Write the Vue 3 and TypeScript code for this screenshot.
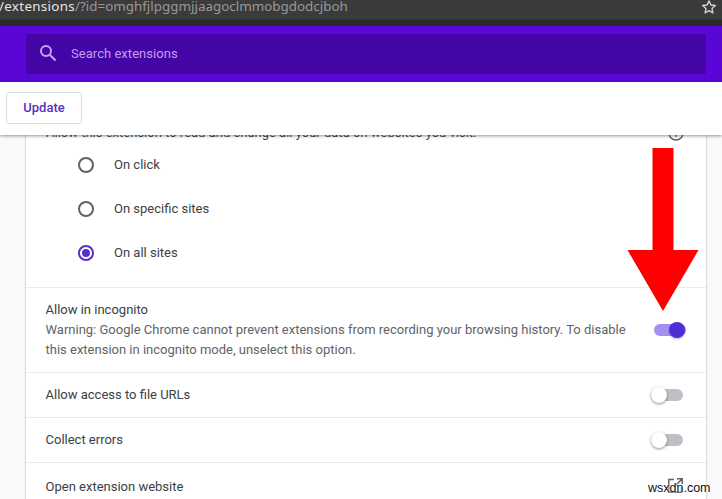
<script setup lang="ts">
interface SiteOption { label: string; checked: boolean }
const siteOptions: SiteOption[] = [
  { label: 'On click', checked: false },
  { label: 'On specific sites', checked: false },
  { label: 'On all sites', checked: true },
]
</script>

<template>
  <div class="page">
    <div class="urlbar">
      <div class="url"><span class="url-strong">/extensions</span>/?id=omghfjlpggmjjaagoclmmobgdodcjboh</div>
      <svg class="star" width="16" height="16" viewBox="0 0 24 24" fill="none" stroke="#d4d4d4" stroke-width="2" stroke-linejoin="round">
        <path d="M12 2.8l2.8 6.2 6.7.7-5 4.5 1.4 6.6L12 17.4l-5.9 3.4 1.4-6.6-5-4.5 6.7-.7z" />
      </svg>
    </div>
    <header class="header">
      <div class="search">
        <svg class="search-icon" width="24" height="24" viewBox="0 0 24 24" fill="none" stroke="#c9a4f4" stroke-width="2">
          <circle cx="10" cy="10" r="5" />
          <path d="M13.800 13.800l5.700 5.700" />
        </svg>
        <span class="search-text">Search extensions</span>
      </div>
    </header>
    <div class="toolbar">
      <button class="update" type="button">Update</button>
    </div>
    <main class="scroller">
      <section class="card">
        <div class="perm-head">
          <span>Allow this extension to read and change all your data on websites you visit:</span>
          <svg class="info" width="18" height="18" viewBox="0 0 18 18" fill="none" stroke="#5f6368" stroke-width="1.6">
            <circle cx="9" cy="9" r="7" />
            <path d="M9 8v5M9 5v1.6" />
          </svg>
        </div>
        <div class="radios">
          <div v-for="o in siteOptions" :key="o.label" class="radio-row">
            <span class="radio" :class="{ on: o.checked }"></span>
            <span class="lift">{{ o.label }}</span>
          </div>
        </div>
        <div class="row incognito">
          <div class="incognito-text">
            <div>Allow in incognito</div>
            <div class="warning">Warning: Google Chrome cannot prevent extensions from recording your browsing history. To disable this extension in incognito mode, unselect this option.</div>
          </div>
          <span class="toggle on"></span>
        </div>
        <div class="row simple">
          <span class="lift">Allow access to file URLs</span>
          <span class="toggle"></span>
        </div>
        <div class="row simple">
          <span class="lift">Collect errors</span>
          <span class="toggle"></span>
        </div>
        <div class="row simple last">
          <span class="drop">Open extension website</span>
          <svg class="open" width="15" height="15" viewBox="0 0 15 15" fill="none" stroke="#5f6368" stroke-width="1.5">
            <path d="M6 1.500H.8v12.700h12.700V9M9 .8h5.200V6M14 1L6.500 8.500" />
          </svg>
        </div>
      </section>
    </main>
    <svg class="arrow" width="72" height="164" viewBox="0 0 72 164">
      <path d="M25.500 0H46.500V102H71.500L36 163L0.500 102H25.500Z" fill="#fe0000" />
    </svg>
    <span class="mark">wsxdn.com</span>
  </div>
</template>

<style>
html, body { margin: 0; padding: 0; }
</style>

<style scoped>
.page {
  position: relative;
  width: 722px;
  height: 499px;
  overflow: hidden;
  display: flex;
  flex-direction: column;
  background: #f8f9fa;
  font-family: Roboto, "Liberation Sans", sans-serif;
  font-size: 13px;
  color: #3c4043;
}
.urlbar {
  height: 26px;
  flex: none;
  box-sizing: border-box;
  background: linear-gradient(#3b3b3b 0, #3b3b3b 19px, #2a2a2a 20px, #2a2a2a 100%);
  display: flex;
  justify-content: space-between;
}
.url {
  font-family: "Noto Sans", "Open Sans", sans-serif;
  font-size: 13.400px;
  line-height: 13px;
  color: #989898;
  white-space: nowrap;
}
.url-strong { color: #e6e6e6; margin-left: -1px; letter-spacing: .3px; }
.star { margin: -1px 5px 0 0; }
.header {
  height: 56px;
  flex: none;
  box-sizing: border-box;
  background: #5a06d6;
  padding: 8px 16px 8px 26px;
}
.search {
  height: 40px;
  box-sizing: border-box;
  background: #4305a6;
  border-radius: 2px;
  display: flex;
  align-items: center;
  padding: 0 0 2px 10px;
  gap: 11px;
}
.search-text { color: #c39cf3; font-size: 13px; letter-spacing: .04px; }
.toolbar {
  position: relative;
  z-index: 2;
  height: 53px;
  flex: none;
  box-sizing: border-box;
  background: #fff;
  padding: 10px 6px;
  box-shadow: 0 1px 3px rgba(60, 64, 67, .55);
}
.update {
  display: block;
  width: 76px;
  height: 32px;
  box-sizing: border-box;
  background: #fff;
  border: 1px solid #dadce0;
  border-radius: 4px;
  color: #5a2fc0;
  font: 500 13px Roboto, "Liberation Sans", sans-serif;
  padding: 0 0 2px;
}
.scroller { flex: 1; min-height: 0; overflow: hidden; padding: 0 16px 0 26px; }
.card {
  margin-top: -12px;
  background: #fff;
  box-shadow: 0 0 2px rgba(60, 64, 67, .45);
  height: 400px;
}
.perm-head {
  display: flex;
  justify-content: space-between;
  align-items: center;
  height: 20px;
  padding: 0 21px 0 20px;
  line-height: 20px;
}
.radios { padding: 0 0 12px 52px; border-bottom: 1px solid #e8eaed; }
.radio-row { height: 44px; display: flex; align-items: center; gap: 20px; }
.lift { padding-bottom: 2px; }
.drop { padding-top: 2px; }
.radio {
  width: 16px;
  height: 16px;
  box-sizing: border-box;
  border: 2px solid #5f6368;
  border-radius: 50%;
  display: block;
  position: relative;
}
.radio.on { border-color: #5a2fc9; }
.radio.on::after {
  content: "";
  position: absolute;
  inset: 2px;
  border-radius: 50%;
  background: #5a2fc9;
}
.row {
  display: flex;
  justify-content: space-between;
  align-items: center;
  padding: 0 23px 0 19.500px;
  border-bottom: 1px solid #e8eaed;
}
.row.last { border-bottom: 0; }
.simple { height: 44px; }
.incognito { height: 85px; box-sizing: border-box; }
.incognito-text { width: 600px; line-height: 20px; }
.warning { color: #5f6368; }
.toggle {
  position: relative;
  display: block;
  width: 32px;
  height: 12px;
  border-radius: 6px;
  background: #bdc1c6;
  flex: none;
}
.toggle::after {
  content: "";
  position: absolute;
  left: 0;
  top: -2px;
  width: 16px;
  height: 16px;
  border-radius: 50%;
  background: #fff;
  box-shadow: 0 1px 3px rgba(0, 0, 0, .45);
}
.toggle.on { background: #a48ff0; margin-right: -3px; }
.toggle.on::after { left: 15px; background: #4e2fd6; box-shadow: 0 1px 2px rgba(78, 47, 214, .4); }
.arrow { position: absolute; left: 627px; top: 148px; }
.mark {
  position: absolute;
  left: 648px;
  top: 481px;
  font: 12.500px "Liberation Sans", sans-serif;
  color: #111;
  text-shadow: 0 0 2px #fff, 0 0 2px #fff;
}
</style>
